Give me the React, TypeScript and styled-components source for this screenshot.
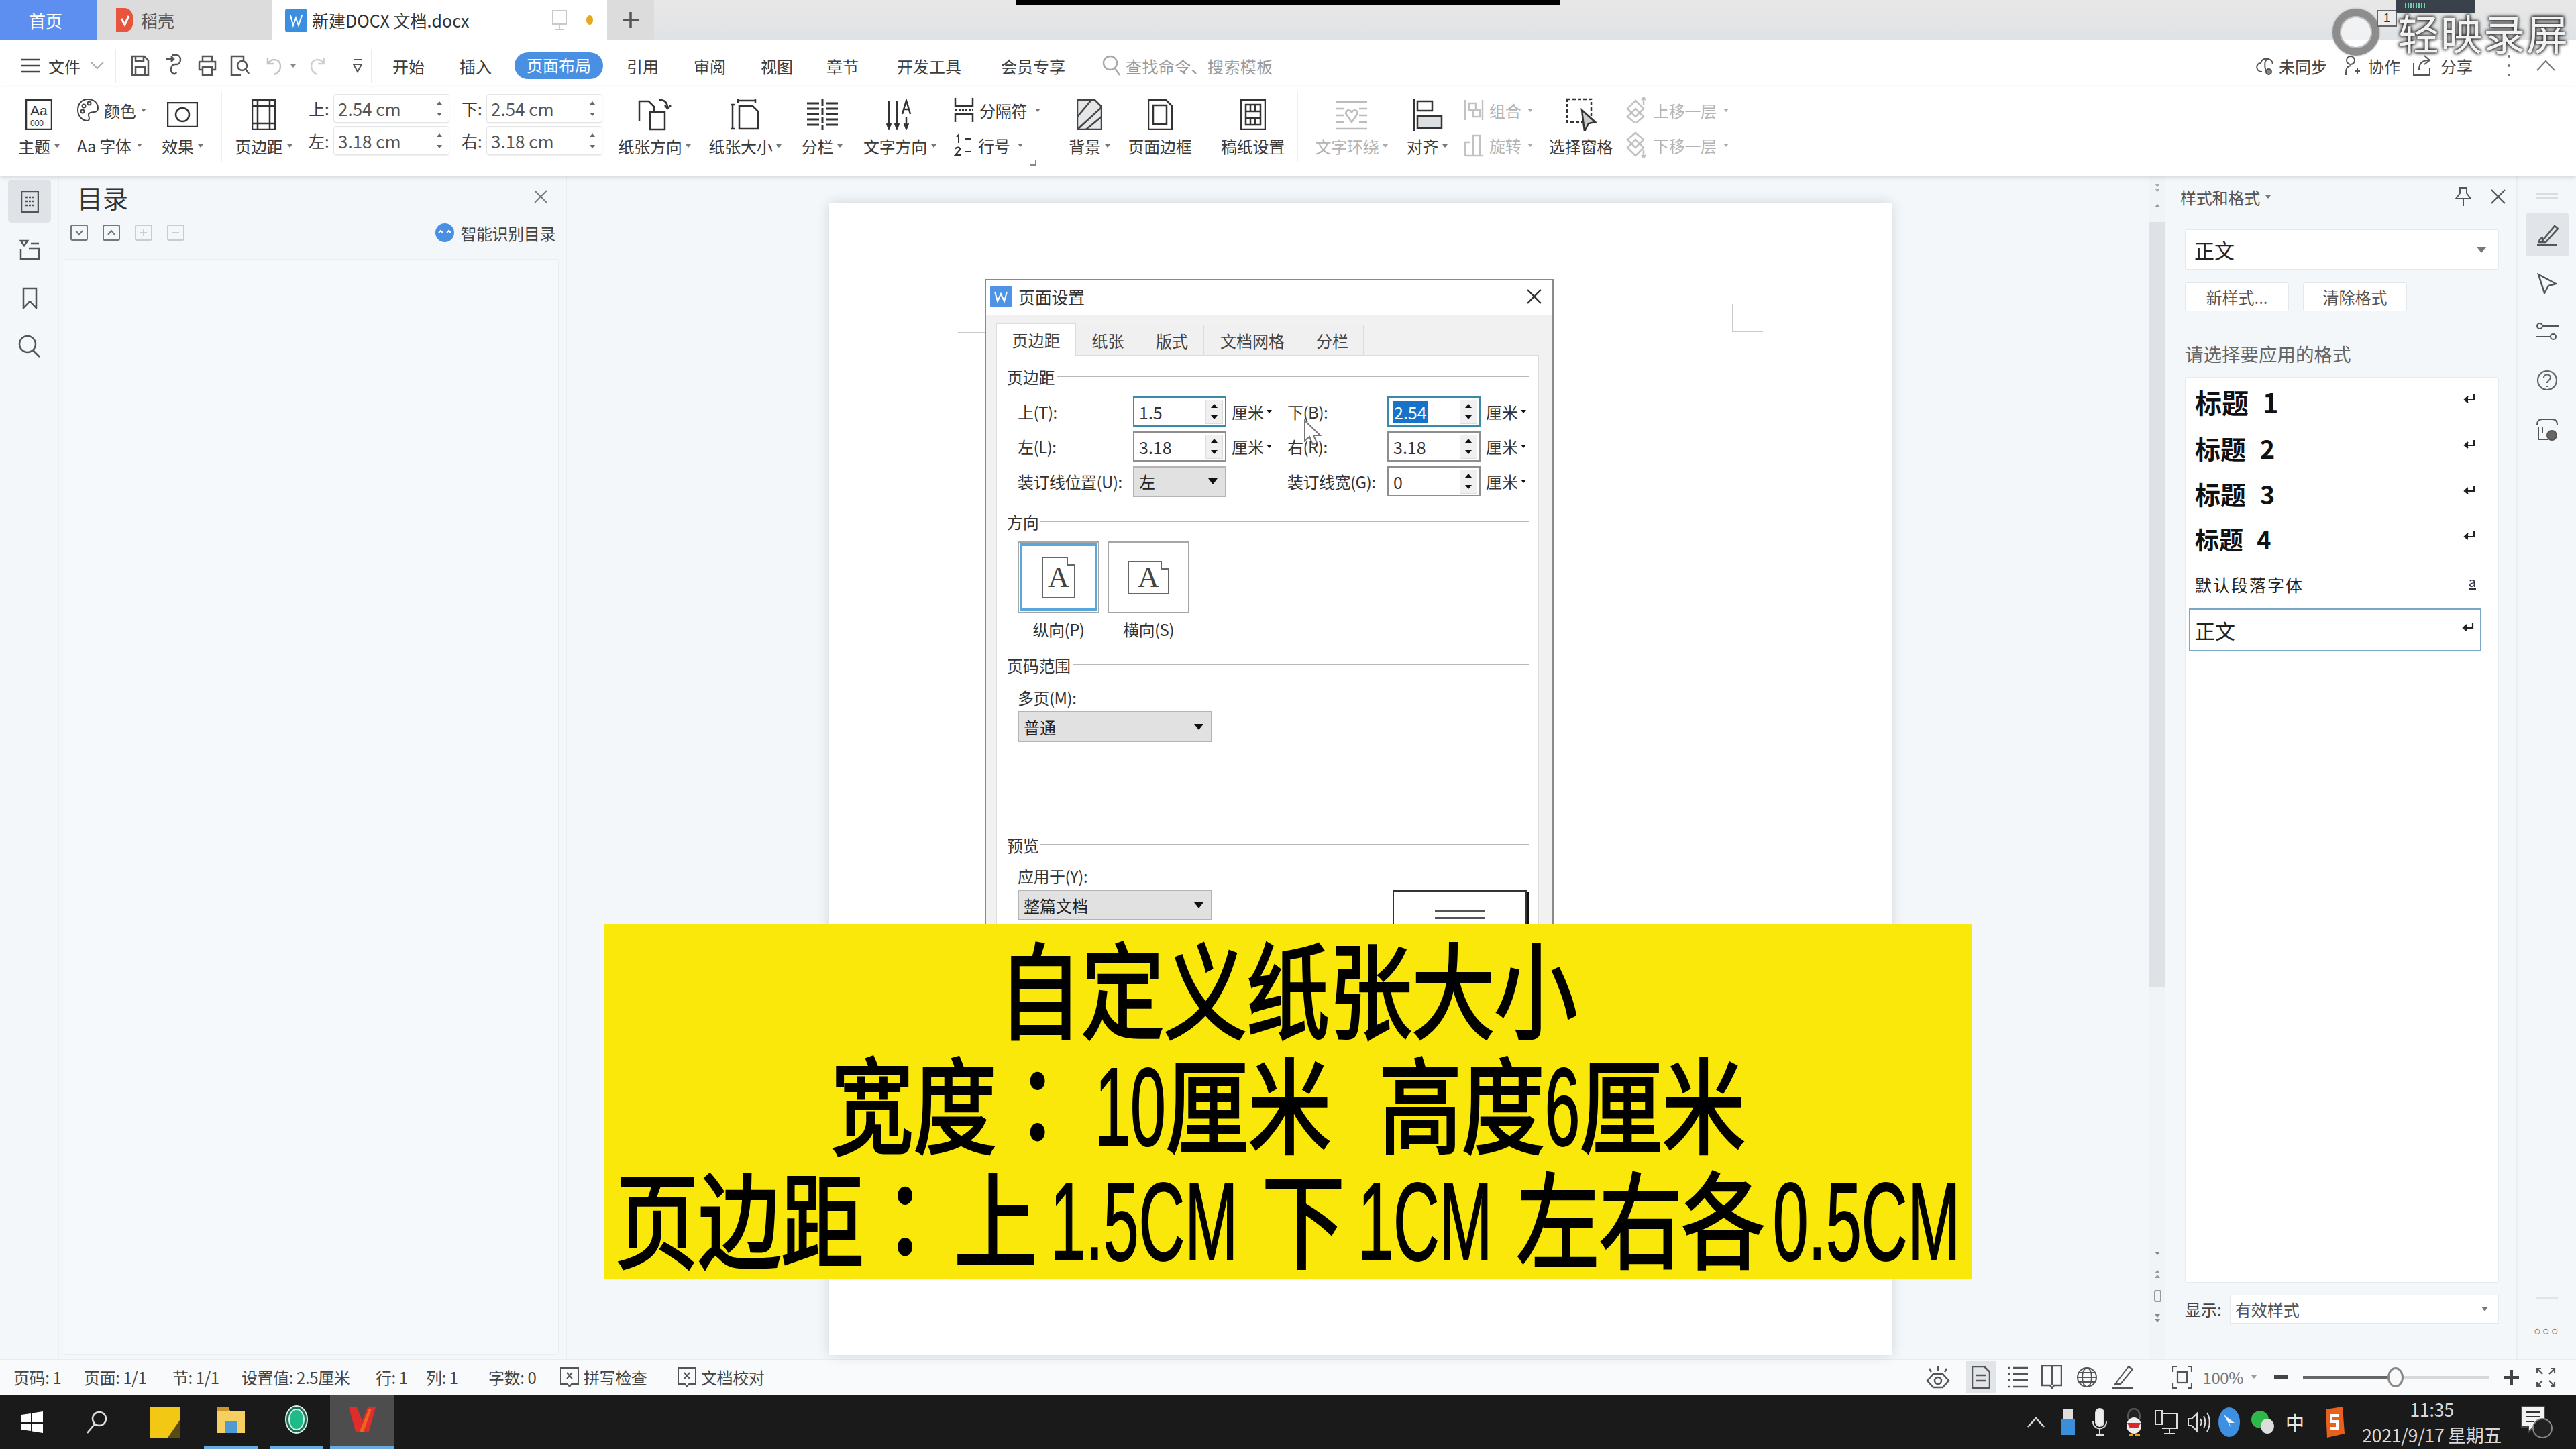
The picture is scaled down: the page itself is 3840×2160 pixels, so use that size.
import React from 'react';
import styled, { createGlobalStyle } from 'styled-components';

const Global = createGlobalStyle`
  html, body { margin: 0; padding: 0; background: #fff; }
  * { box-sizing: border-box; }
`;
const CJK = `"Noto Sans CJK SC", "Noto Sans", sans-serif`;

const Screen = styled.div`
  position: relative; width: 3840px; height: 2160px; overflow: hidden;
  display: flex; flex-direction: column; font-family: ${CJK}; font-size: 24px; color: #3c3c3c; background: #f3f6f8;
`;
const Svg = styled.svg<{ $c?: string; $sw?: number; $fill?: string }>`
  display: block; flex: none; fill: ${p => p.$fill || 'none'}; stroke: ${p => p.$c || '#4a4a4a'}; stroke-width: ${p => p.$sw ?? 2.5};
`;
const Ic: React.FC<{ w: number; h: number; c?: string; sw?: number; fill?: string; children?: React.ReactNode }> = ({ w, h, c, sw, fill, children }) => (
  <Svg width={w} height={h} viewBox={`0 0 ${w} ${h}`} $c={c} $sw={sw} $fill={fill}>{children}</Svg>
);
const Caret = styled.i<{ $c?: string; $s?: number; $ml?: number }>`
  display: inline-block; flex: none; width: 0; height: 0; margin-left: ${p => p.$ml ?? 6}px; vertical-align: middle;
  border-left: ${p => p.$s ?? 4}px solid transparent; border-right: ${p => p.$s ?? 4}px solid transparent;
  border-top: ${p => (p.$s ?? 4) * 1.4}px solid ${p => p.$c || '#777'};
`;

/* title bar */
const TabBar = styled.div`
  height: 60px; flex: none; display: flex; background: linear-gradient(#e9e7e6, #dfe3e6);
`;
const HomeTab = styled.div`
  width: 144px; background: #5c8ff0; color: #fff; display: flex; align-items: center; justify-content: center; font-size: 25px; padding-right: 8px;
`;
const GrayTab = styled.div`
  width: 261px; background: #dcdcdc; display: flex; align-items: center; gap: 10px; padding-left: 28px; font-size: 25px; color: #555;
`;
const DocTab = styled.div`
  width: 500px; background: #fff; display: flex; align-items: center; padding-left: 20px; font-size: 25px; color: #333;
`;
const DocName = styled.span` margin-left: 7px; width: 357px; `;
const OrangeDot = styled.span` width: 10px; height: 14px; border-radius: 50%; background: #e8a81e; margin-left: 28px; `;
const PlusTab = styled.div`
  width: 70px; background: #dcdcdc; display: flex; align-items: center; justify-content: center;
`;

/* menu row */
const MenuRow = styled.div`
  height: 70px; flex: none; background: #fff; display: flex; align-items: center; padding: 6px 30px 0 32px; position: relative; z-index: 2;
`;
const MenuTab = styled.span<{ $ml: number; $on?: boolean }>`
  margin-left: ${p => p.$ml}px; font-size: 24px; white-space: nowrap; color: ${p => (p.$on ? '#fff' : '#3c3c3c')};
  ${p => p.$on && `background:#4a90e2;border-radius:20px;height:40px;line-height:38px;padding:0 18px;`}
`;
const Gap = styled.span<{ $w: number }>` flex: none; width: ${p => p.$w}px; `;
const VLine = styled.span<{ $ml: number; $h?: number }>`
  flex: none; width: 1px; height: ${p => p.$h ?? 50}px; background: #ececec; margin-left: ${p => p.$ml}px;
`;
const SearchText = styled.span` margin-left: 8px; color: #9a9a9a; font-size: 24px; letter-spacing: 0.4px; `;
const MenuRight = styled.div` margin-left: auto; display: flex; align-items: center; font-size: 24px; color: #444; `;

/* ribbon */
const Ribbon = styled.div`
  height: 133px; flex: none; background: #fff; display: flex; align-items: flex-start; padding: 16px 0 0 20px; position: relative; z-index: 2;
  box-shadow: 0 2px 6px rgba(0, 0, 0, 0.13);
`;
const Big = styled.div<{ $w: number; $ml?: number; $dim?: boolean }>`
  flex: none; width: ${p => p.$w}px; margin-left: ${p => p.$ml ?? 0}px; display: flex; flex-direction: column; align-items: center;
  color: ${p => (p.$dim ? '#b4b4b4' : '#3a3a3a')};
`;
const BigIcon = styled.div` height: 49px; display: flex; align-items: center; justify-content: center; `;
const BigLabel = styled.div` height: 44px; display: flex; align-items: center; white-space: nowrap; font-size: 24px; letter-spacing: -0.3px; `;
const Stack = styled.div<{ $w: number; $ml?: number }>`
  flex: none; width: ${p => p.$w}px; margin-left: ${p => p.$ml ?? 0}px; display: flex; flex-direction: column; gap: 16px;
`;
const StackRow = styled.div<{ $dim?: boolean }>`
  height: 36px; display: flex; align-items: center; gap: 8px; white-space: nowrap; font-size: 24px; letter-spacing: -0.3px;
  color: ${p => (p.$dim ? '#b4b4b4' : '#3a3a3a')};
`;
const RibbonSep = styled.span<{ $ml: number }>`
  flex: none; width: 1px; height: 105px; margin-top: -10px; background: #f0f0f0; margin-left: ${p => p.$ml}px;
`;
const Fields = styled.div<{ $ml: number }>`
  flex: none; margin-left: ${p => p.$ml}px; margin-top: -6px; display: grid; grid-template-columns: 37px 173px 18px 37px 173px; row-gap: 5px; width: 438px; align-items: center;
`;
const FieldLabel = styled.span` font-size: 24px; white-space: nowrap; `;
const Field = styled.div`
  height: 43px; border: 1px solid #e4e4e4; border-radius: 4px; box-shadow: 0 1px 2px rgba(0,0,0,.08); display: flex; align-items: center; justify-content: space-between;
  padding: 0 10px 0 6px; font-size: 26px; color: #555;
`;
const MiniSpin = styled.div` display: flex; flex-direction: column; gap: 12px; `;
const Up = styled.i<{ $c?: string; $s?: number }>`
  display: block; width: 0; height: 0; border-left: ${p => p.$s ?? 4}px solid transparent; border-right: ${p => p.$s ?? 4}px solid transparent;
  border-bottom: ${p => (p.$s ?? 4) * 1.3}px solid ${p => p.$c || '#666'};
`;
const Down = styled(Up)`
  border-bottom: 0; border-top: ${p => (p.$s ?? 4) * 1.3}px solid ${p => p.$c || '#666'};
`;
const Expander = styled.span`
  flex: none; align-self: flex-start; margin: 92px 0 0 -18px; width: 9px; height: 9px; border-right: 2px solid #888; border-bottom: 2px solid #888;
`;

/* main */
const Main = styled.div` flex: 1; min-height: 0; display: flex; background: #f3f7f9; `;
const LeftRail = styled.div`
  width: 88px; flex: none; padding: 5px 0 0 12px; display: flex; flex-direction: column; gap: 8px; border-right: 2px solid #eceff1;
`;
const RailBtn = styled.div<{ $on?: boolean }>`
  width: 64px; height: 64px; border-radius: 5px; display: flex; align-items: center; justify-content: center; background: ${p => (p.$on ? '#dfe3e7' : 'transparent')};
`;
const NavPanel = styled.div`
  width: 757px; flex: none; padding: 8px 10px 6px 7px; display: flex; flex-direction: column; border-right: 2px solid #eceff1;
`;
const NavHead = styled.div` height: 44px; display: flex; align-items: center; justify-content: space-between; padding: 0 17px 0 20px; `;
const NavTitle = styled.span` font-size: 38px; color: #333; `;
const NavTools = styled.div` height: 24px; margin-top: 20px; display: flex; align-items: center; padding: 0 5px 0 10px; gap: 22px; `;
const Smart = styled.div` margin-left: auto; display: flex; align-items: center; gap: 8px; font-size: 24px; color: #444; letter-spacing: -0.4px; `;
const NavBox = styled.div` flex: 1; margin-top: 27px; border: 1px solid #e9edf0; border-radius: 4px; background: #f5f9fb; `;
const DocArea = styled.div` flex: 1; min-width: 0; padding: 39px 0 6px 391px; display: flex; `;
const Page = styled.div`
  position: relative; flex: none; width: 1584px; background: #fff; box-shadow: 0 0 18px rgba(0, 0, 0, 0.14);
`;
const CropMark = styled.span`
  position: absolute; left: 1346px; top: 151px; width: 46px; height: 42px; border-left: 2px solid #c9c9c9; border-bottom: 2px solid #c9c9c9;
`;
const CropLeft = styled.span` position: absolute; left: 192px; top: 193px; width: 42px; height: 2px; background: #c9c9c9; `;

/* scroll */
const Scroll = styled.div`
  width: 24px; flex: none; display: flex; flex-direction: column; align-items: center; background: #f1f4f6; padding-top: 11px;
`;
const Thumb = styled.div` width: 24px; height: 1140px; flex: none; margin-top: 22px; background: #dee1e5; `;
const ScrollGlyph = styled.div<{ $mt: number }>` margin-top: ${p => p.$mt}px; display: flex; flex-direction: column; gap: 2px; align-items: center; `;
const ScrollDot = styled.span<{ $mt: number }>` margin-top: ${p => p.$mt}px; width: 11px; height: 18px; border: 2px solid #999; border-radius: 3px; `;

/* styles panel */
const StylePanel = styled.div`
  width: 525px; flex: none; padding: 15px 26px 53px 29px; display: flex; flex-direction: column; border-right: 2px solid #eceff1;
`;
const StyleHead = styled.div` height: 30px; margin: 0 -10px 0 -7px; flex: none; display: flex; align-items: center; color: #555; font-size: 24px; letter-spacing: -0.2px; `;
const HeadTools = styled.div` margin-left: auto; display: flex; align-items: center; gap: 28px; `;
const Combo = styled.div`
  height: 60px; margin-top: 34px; flex: none; background: #fff; border: 1px solid #e6e9ec; border-radius: 3px; display: flex; align-items: center; justify-content: space-between;
  padding: 0 18px 0 13px; font-size: 30px; color: #222;
`;
const BtnRow = styled.div` display: flex; gap: 21px; margin-top: 19px; flex: none; `;
const PanelBtn = styled.div`
  width: 155px; height: 43px; background: #fff; border: 1px solid #e4e7ea; border-radius: 3px; display: flex; align-items: center; justify-content: center; font-size: 24px; color: #555;
`;
const HintLabel = styled.div` margin-top: 47px; height: 32px; flex: none; line-height: 32px; font-size: 27.5px; color: #666; `;
const StyleList = styled.div`
  flex: 1; min-height: 0; margin-top: 19px; background: #fff; border: 1px solid #e8ebee; border-radius: 3px; padding: 7px 25px 0 5px; display: flex; flex-direction: column;
`;
const StyleItem = styled.div<{ $sel?: boolean }>`
  height: ${p => (p.$sel ? 64 : 68)}px; flex: none; display: flex; align-items: center; justify-content: space-between; padding: 0 8px 10px 9px;
  ${p => p.$sel && `border:2px solid #7aa6c8;padding:0 8px 0 7px;margin-top:-3px;`}
`;
const HeadingText = styled.span<{ $fs: number; $gap: number }>`
  font-size: ${p => p.$fs}px; font-weight: 700; color: #111; white-space: pre; word-spacing: ${p => p.$gap}px;
`;
const DefaultText = styled.span` font-size: 25px; letter-spacing: 2px; color: #222; `;
const BodyText = styled.span` font-size: 30px; color: #222; `;
const Under = styled.span` font-size: 20px; line-height: 20px; color: #333; border-bottom: 2px solid #333; margin-bottom: 6px; `;
const EnterWrap = styled.span` margin-bottom: 8px; `;
const ShowRow = styled.div` margin-top: 18px; height: 43px; flex: none; display: flex; align-items: center; gap: 12px; font-size: 24px; color: #444; `;
const ShowSelect = styled.div`
  flex: 1; height: 43px; background: #fff; border: 1px solid #e6e9ec; display: flex; align-items: center; justify-content: space-between; padding: 0 15px 0 7px; color: #555;
`;
const RightRail = styled.div` width: 87px; flex: none; display: flex; flex-direction: column; align-items: center; padding-top: 25px; `;
const Handle = styled.span` width: 32px; height: 8px; flex: none; border-top: 2px solid #dcdcdc; border-bottom: 2px solid #dcdcdc; `;
const RightBtn = styled.div<{ $on?: boolean; $mt?: number }>`
  width: 64px; height: 64px; flex: none; margin-top: ${p => p.$mt ?? 9}px; border-radius: 3px; display: flex; align-items: center; justify-content: center; background: ${p => (p.$on ? '#e1e5e9' : 'transparent')};
`;
const RailFoot = styled.div` margin-top: auto; padding-bottom: 36px; display: flex; flex-direction: column; align-items: center; gap: 42px; `;
const FootLine = styled.span` width: 32px; height: 2px; background: #e3e3e3; `;
const Dots = styled.span` font-size: 18px; letter-spacing: 2px; color: #666; line-height: 12px; font-family: "Liberation Sans", sans-serif; `;

/* status */
const StatusBar = styled.div`
  height: 54px; flex: none; background: #f8fafb; display: flex; align-items: center; padding: 0 30px 2px 20px; font-size: 24px; color: #444; border-top: 1px solid #e9ecee; letter-spacing: -0.4px;
`;
const StatusItem = styled.div<{ $w: number }>` width: ${p => p.$w}px; flex: none; display: flex; align-items: center; gap: 7px; white-space: nowrap; `;
const StatusRight = styled.div` margin-left: auto; display: flex; align-items: center; height: 100%; `;
const ViewActive = styled.div` width: 46px; height: 48px; background: #e2e5e8; display: flex; align-items: center; justify-content: center; margin-left: 22px; `;
const Slider = styled.div`
  position: relative; width: 277px; height: 4px; margin-left: 23px; background: linear-gradient(to right, #666 50%, #d8d8d8 50%);
`;
const Knob = styled.span`
  position: absolute; left: 126px; top: -13px; width: 24px; height: 30px; border-radius: 50%; background: #f8f8f8; border: 3px solid #888;
`;
const Percent = styled.span` margin-left: 16px; color: #777; `;

/* taskbar */
const Taskbar = styled.div` height: 80px; flex: none; background: #1a1a1a; display: flex; align-items: stretch; `;
const Slot = styled.div<{ $w: number; $ml?: number; $run?: boolean; $act?: boolean }>`
  width: ${p => p.$w}px; margin-left: ${p => p.$ml ?? 0}px; flex: none; display: flex; align-items: center; justify-content: center; padding-bottom: ${p => (p.$run ? 4 : 0)}px;
  border-bottom: ${p => (p.$run ? '4px solid #6aa9dd' : '0')}; background: ${p => (p.$act ? '#4d4d4d' : 'transparent')};
`;
const Tray = styled.div` margin-left: auto; display: flex; align-items: center; `;
const TrayItem = styled.div<{ $ml: number }>` margin-left: ${p => p.$ml}px; flex: none; display: flex; align-items: center; color: #e6e6e6; font-size: 28px; `;
const Clock = styled.div`
  width: 210px; margin-left: 25px; text-align: center; color: #d8d8d8; font-size: 27px; line-height: 38px; letter-spacing: -0.4px; white-space: nowrap;
`;

/* dialog */
const Dialog = styled.div`
  position: absolute; left: 1468px; top: 416px; width: 848px; height: 1100px; background: #f1f1f1; border: 2px solid #8a8a8a; z-index: 3; display: flex; flex-direction: column; font-size: 24px; color: #333;
`;
const DlgTitle = styled.div` height: 52px; flex: none; background: #fff; display: flex; align-items: center; padding: 0 16px 4px 6px; font-size: 25px; letter-spacing: -0.3px; `;
const DlgTitleText = styled.span` margin-left: 10px; `;
const DlgClose = styled.div` margin-left: auto; `;
const DlgTabs = styled.div` flex: none; display: flex; padding: 12px 0 0 15px; height: 60px; margin-bottom: -1px; `;
const DlgTab = styled.div<{ $w: number; $on?: boolean }>`
  width: ${p => p.$w}px; display: flex; align-items: center; justify-content: center; position: relative; z-index: 1; color: #444;
  background: ${p => (p.$on ? '#fff' : '#f0f0f0')}; border: 1px solid #dcdcdc; border-left: ${p => (p.$on ? '1px solid #dcdcdc' : '0')};
  border-bottom: ${p => (p.$on ? '0' : '1px solid #dcdcdc')};
  ${p => !p.$on && `margin-top:2px;`}
`;
const Pane = styled.div`
  flex: 1; margin: 0 20px 0 15px; background: #fff; border: 1px solid #dcdcdc; padding: 16px 14px 0 15px;
`;
const Section = styled.div<{ $mt?: number }>`
  height: 30px; margin-top: ${p => p.$mt ?? 0}px; display: flex; align-items: center; gap: 3px; font-size: 24px; letter-spacing: -0.3px; color: #333;
  &::after { content: ''; flex: 1; height: 2px; background: #b8b8b8; }
`;
const Form = styled.div`
  margin: 15px 0 0 16px; display: grid; grid-template-columns: 172px 139px 91px 149px 139px 1fr; grid-auto-rows: 45px; row-gap: 7px; align-items: center;
`;
const Lb = styled.span` white-space: nowrap; letter-spacing: -0.5px; `;
const Spin = styled.div<{ $active?: boolean }>`
  height: 45px; border: 2px solid ${p => (p.$active ? '#3a8aa8' : '#8e8e8e')}; background: #fff; display: flex; align-items: center; padding: 0 3px 0 7px; justify-content: space-between; font-size: 25px;
`;
const SpinBtns = styled.div` width: 26px; height: 36px; background: #f0f0f0; border: 1px solid #dedede; display: flex; flex-direction: column; justify-content: space-around; align-items: center; `;
const Sel = styled.span` background: #1573c9; color: #fff; padding: 0 1px; line-height: 32px; `;
const Unit = styled.span` padding-left: 8px; display: flex; align-items: center; white-space: nowrap; `;
const Combo2 = styled.div<{ $w?: number }>`
  width: ${p => (p.$w ? `${p.$w}px` : 'auto')}; height: 46px; background: #e1e1e1; border: 2px solid #b4b4b4; display: flex; align-items: center; justify-content: space-between; padding: 0 11px 0 7px; color: #222;
`;
const Orients = styled.div` margin: 15px 0 0 16px; display: flex; gap: 12px; `;
const OrientCol = styled.div` width: 122px; display: flex; flex-direction: column; align-items: center; `;
const Orient = styled.div<{ $on?: boolean }>`
  width: 122px; height: 107px; background: #fff; border: 2px solid #a6a6a6; display: flex; align-items: center; justify-content: center;
  ${p => p.$on && `outline: 4px solid #58a6dc; outline-offset: -7px;`}
`;
const OrientLabel = styled.span` margin-top: 9px; height: 30px; line-height: 30px; letter-spacing: -0.5px; white-space: nowrap; `;
const PageGlyph = styled.div<{ $land?: boolean }>`
  position: relative; width: ${p => (p.$land ? 62 : 50)}px; height: ${p => (p.$land ? 50 : 62)}px; border: 2px solid #666; display: flex; align-items: center; justify-content: center;
  font-family: "Liberation Serif", serif; font-size: 44px; line-height: 1; color: #444;
  &::after { content: ''; position: absolute; right: -2px; top: -2px; width: 11px; height: 11px; background: #fff; border-left: 2px solid #666; border-bottom: 2px solid #666; }
`;
const Indented = styled.div<{ $mt: number }>` margin: ${p => p.$mt}px 0 0 16px; height: 30px; line-height: 30px; letter-spacing: -0.5px; `;
const SelectWrap = styled.div` margin: 5px 0 0 16px; `;
const ApplyRow = styled.div` display: flex; align-items: flex-start; `;
const Preview = styled.div`
  width: 200px; height: 170px; margin: 53px 0 0 269px; background: #fff; border: 2px solid #333; box-shadow: 3px 3px 0 #111; padding-top: 28px; display: flex; flex-direction: column; align-items: center; gap: 7px;
`;
const PrevLine = styled.span` width: 74px; height: 3px; background: #555; `;
const Cursor = styled.div` position: absolute; left: 473px; top: 207px; z-index: 5; `;

/* overlays */
const Banner = styled.div`
  position: absolute; left: 900px; top: 1378px; width: 2040px; height: 528px; background: #f9e80a; z-index: 4; overflow: hidden; padding-top: 5px; color: #000;
`;
const BannerLine = styled.div`
  width: 2800px; margin-left: -380px; height: 171px; line-height: 171px; text-align: center; white-space: nowrap; font-size: 155px; font-weight: 400; transform: scaleX(0.795);
  -webkit-text-stroke: 4px #000;
`;
const Latin = styled.span<{ $em: number }>`
  display: inline-block; width: ${p => p.$em * 0.72 * 166}px; text-align: left; font-family: "Liberation Sans", sans-serif; font-size: 166px;
  transform: scaleX(0.72); transform-origin: 0 50%; line-height: 150px; -webkit-text-stroke: 2px #000;
`;
const Colon = styled.span` font-family: "Noto Sans CJK TC", sans-serif; `;
const Sp = styled.span<{ $w: number }>` display: inline-block; width: ${p => p.$w}px; `;
const TopBlack = styled.div` position: absolute; left: 1514px; top: 0; width: 812px; height: 8px; background: #000; z-index: 6; `;
const Mark = styled.div` position: absolute; left: 3477px; top: 0; width: 363px; height: 90px; z-index: 6; `;
const MarkText = styled.span`
  position: absolute; left: 97px; top: 12px; font-size: 62px; line-height: 72px; letter-spacing: 2px; white-space: nowrap; color: #f2f2f2; text-shadow: 0 0 4px #333, 0 0 4px #333, 0 0 6px #444;
`;
const MarkRing = styled.span`
  position: absolute; left: 0; top: 13px; width: 70px; height: 70px; border-radius: 50%; border: 11px solid #8d8d8d; box-shadow: 0 0 3px #999, inset 0 0 0 2px #bbb; background: rgba(255,255,255,.5);
`;
const MarkBadge = styled.span`
  position: absolute; left: 66px; top: 15px; width: 30px; height: 25px; border: 2px solid #666; background: #eee; font-size: 18px; line-height: 21px; text-align: center; color: #333; font-family: "Liberation Sans", sans-serif;
`;
const Meter = styled.div`
  position: absolute; left: 95px; top: 0; width: 118px; height: 20px; background: #39424a; border-radius: 0 0 4px 4px; padding: 5px 0 0 13px;
`;
const MeterBar = styled.span` display: block; width: 32px; height: 7px; background: repeating-linear-gradient(90deg, #6fd1b0 0 2px, #39424a 2px 4px); `;
const IconText = styled.text`
  font-family: "Liberation Sans", sans-serif; stroke: none; fill: #333;
`;

const Enter = () => (
  <EnterWrap>
    <Ic w={20} h={18} c="#222" sw={2.2}><path d="M17 2v8H4" /><path d="M8 5l-5 5 5 4" fill="#222" /></Ic>
  </EnterWrap>
);
const SpinUD = () => (
  <SpinBtns><Up $c="#111" $s={5} /><Down $c="#111" $s={5} /></SpinBtns>
);
const DocUnit = () => <Unit>厘米<Caret $c="#111" $s={4} $ml={4} /></Unit>;

const App: React.FC = () => (
  <Screen>
    <Global />
    <TabBar>
      <HomeTab>首页</HomeTab>
      <GrayTab>
        <Ic w={28} h={40} c="none" fill="#e8553f"><path d="M1 2h12c9 0 14 8 14 18s-5 18-14 18H1z" /><path d="M9 18l5 9 6-13" stroke="#fff" strokeWidth="3" fill="none" /></Ic>
        稻壳
      </GrayTab>
      <DocTab>
        <Ic w={33} h={33} c="none" fill="#3a8fe0"><rect width="33" height="33" rx="2" /><path d="M8 9l4 15 4-11 4 11 5-15" stroke="#fff" strokeWidth="2" fill="none" /></Ic>
        <DocName>新建DOCX 文档.docx</DocName>
        <Ic w={24} h={38} c="#c9c9c9" sw={2}><rect x="2" y="5" width="20" height="20" /><path d="M12 25v7M6 33h12" /></Ic>
        <OrangeDot />
      </DocTab>
      <PlusTab><Ic w={26} h={26} c="#555" sw={3.5}><path d="M13 1v24M1 13h24" /></Ic></PlusTab>
    </TabBar>

    <MenuRow>
      <Ic w={28} h={24} c="#444" sw={2.5}><path d="M0 3h28M0 12h28M0 21h28" /></Ic>
      <MenuTab $ml={12}>文件</MenuTab>
      <Gap $w={15} />
      <Ic w={20} h={12} c="#aaa" sw={2}><path d="M1 1l9 9 9-9" /></Ic>
      <VLine $ml={17} />
      <Gap $w={22} />
      <Ic w={28} h={32} c="#555"><path d="M2 2h18l6 6v22H2z" /><path d="M7 30V18h14v12M7 2v7h12V2" /></Ic>
      <Gap $w={22} />
      <Ic w={28} h={36} c="#555"><path d="M12 2h6c8 0 8 14 0 14h-2c-4 0-6 4-6 8 0 6 6 8 8 4M2 8h12M10 4l4 4-4 4" /></Ic>
      <Gap $w={22} />
      <Ic w={28} h={32} c="#555"><path d="M7 10V2h14v8M2 10h24v12h-5M7 22H2V10M7 18h14v12H7z" /></Ic>
      <Gap $w={20} />
      <Ic w={30} h={32} c="#555"><path d="M16 30H2V2h18v6" /><circle cx="18" cy="16" r="7" /><path d="M23 21l5 7" /></Ic>
      <Gap $w={22} />
      <Ic w={26} h={32} c="#c4c4c4"><path d="M4 4v9h9M5 12c6-8 18-6 18 5 0 6-4 10-9 12" /></Ic>
      <Caret $c="#888" $ml={12} />
      <Gap $w={20} />
      <Ic w={26} h={32} c="#d0d0d0"><path d="M22 4v9h-9M21 12C15 4 3 6 3 17c0 6 4 10 9 12" /></Ic>
      <Gap $w={38} />
      <Ic w={16} h={22} c="#555" sw={2}><path d="M2 2h12M8 20L2 9h12z" /></Ic>
      <VLine $ml={12} />
      <MenuTab $ml={31}>开始</MenuTab>
      <MenuTab $ml={52}>插入</MenuTab>
      <MenuTab $ml={34} $on>页面布局</MenuTab>
      <MenuTab $ml={35}>引用</MenuTab>
      <MenuTab $ml={52}>审阅</MenuTab>
      <MenuTab $ml={52}>视图</MenuTab>
      <MenuTab $ml={50}>章节</MenuTab>
      <MenuTab $ml={57}>开发工具</MenuTab>
      <MenuTab $ml={59}>会员专享</MenuTab>
      <Gap $w={55} />
      <Ic w={27} h={32} c="#aaa"><circle cx="12" cy="12" r="10" /><path d="M19 20l7 10" /></Ic>
      <SearchText>查找命令、搜索模板</SearchText>
      <MenuRight>
        <Ic w={30} h={36} c="#555" sw={2}><path d="M10 27C0 27 0 14 8 14c2-10 18-8 18 2M20 8c-8 0-6 14-4 18" /><circle cx="20" cy="27" r="4" fill="#888" /></Ic>
        <Gap $w={5} />未同步
        <Gap $w={25} />
        <Ic w={24} h={36} c="#555" sw={2}><circle cx="10" cy="10" r="6" /><path d="M3 32c0-8 0-12 7-14M16 26h8M20 22v8" /></Ic>
        <Gap $w={12} />协作
        <Gap $w={18} />
        <Ic w={30} h={36} c="#555" sw={2}><path d="M2 14v18h24V22M10 24c0-10 6-14 14-14M18 3l8 7-8 6" /></Ic>
        <Gap $w={12} />分享
        <Gap $w={52} />
        <Ic w={4} h={36} c="none" fill="#777"><circle cx="2" cy="4" r="2" /><circle cx="2" cy="18" r="2" /><circle cx="2" cy="32" r="2" /></Ic>
        <Gap $w={38} />
        <Ic w={30} h={18} c="#777" sw={2}><path d="M2 16L15 2l13 14" /></Ic>
      </MenuRight>
    </MenuRow>

    <Ribbon>
      <Big $w={76}>
        <BigIcon><Ic w={40} h={46} c="#333"><rect x="1" y="1" width="38" height="44" /><IconText x="7" y="24" fontSize="21">Aa</IconText><IconText x="7" y="40" fontSize="12">000</IconText></Ic></BigIcon>
        <BigLabel>主题<Caret /></BigLabel>
      </Big>
      <Stack $w={117} $ml={19}>
        <StackRow>
          <Ic w={32} h={36} c="#444" sw={2}><path d="M16 2C6 2 1 10 1 18s6 16 14 16c4 0 3-5 2-8s3-5 8-5 6-3 6-6C31 7 24 2 16 2z" /><circle cx="10" cy="12" r="2.5" /><circle cx="18" cy="8" r="2.5" /><circle cx="8" cy="20" r="2.5" /></Ic>
          颜色<Caret $ml={0} />
        </StackRow>
        <StackRow>Aa 字体<Caret $ml={0} /></StackRow>
      </Stack>
      <Big $w={80}>
        <BigIcon><Ic w={46} h={38} c="#333"><rect x="1" y="1" width="44" height="36" /><circle cx="23" cy="19" r="10" /></Ic></BigIcon>
        <BigLabel>效果<Caret /></BigLabel>
      </Big>
      <RibbonSep $ml={18} />
      <Big $w={90} $ml={17}>
        <BigIcon><Ic w={36} h={46} c="#333"><rect x="1" y="1" width="34" height="44" /><path d="M9 1v44M27 1v44M1 10h34M1 36h34" /></Ic></BigIcon>
        <BigLabel>页边距<Caret /></BigLabel>
      </Big>
      <Fields $ml={22}>
        <FieldLabel>上:</FieldLabel>
        <Field>2.54 cm<MiniSpin><Up /><Down /></MiniSpin></Field>
        <span />
        <FieldLabel>下:</FieldLabel>
        <Field>2.54 cm<MiniSpin><Up /><Down /></MiniSpin></Field>
        <FieldLabel>左:</FieldLabel>
        <Field>3.18 cm<MiniSpin><Up /><Down /></MiniSpin></Field>
        <span />
        <FieldLabel>右:</FieldLabel>
        <Field>3.18 cm<MiniSpin><Up /><Down /></MiniSpin></Field>
      </Fields>
      <Big $w={120} $ml={18}>
        <BigIcon><Ic w={50} h={48} c="#333"><path d="M2 34V4h14l8 8v8M18 20h22v26H18z" /><path d="M32 2c8 0 12 4 12 12M40 10l4 5 5-5" /></Ic></BigIcon>
        <BigLabel>纸张方向<Caret /></BigLabel>
      </Big>
      <Big $w={114} $ml={18}>
        <BigIcon><Ic w={42} h={46} c="#333"><path d="M2 8v36M0 8h5M0 44h5M10 2h26M10 0v5M36 0v5" /><path d="M12 44V10h20l8 8v26z" /></Ic></BigIcon>
        <BigLabel>纸张大小<Caret /></BigLabel>
      </Big>
      <Big $w={65} $ml={25}>
        <BigIcon><Ic w={46} h={46} c="#333" sw={3}><path d="M23 0v46" strokeDasharray="10 3" /><path d="M0 6h18M0 14h18M0 22h18M0 30h18M0 38h18M28 6h18M28 14h18M28 22h18M28 30h18M28 38h18" /></Ic></BigIcon>
        <BigLabel>分栏<Caret /></BigLabel>
      </Big>
      <Big $w={111} $ml={28}>
        <BigIcon><Ic w={42} h={46} c="#333"><path d="M4 2v38M1 36l3 8 3-8M16 2v38M13 36l3 8 3-8M30 26v14M27 36l3 8 3-8M24 22l6-20 6 20M26 15h8" /></Ic></BigIcon>
        <BigLabel>文字方向<Caret /></BigLabel>
      </Big>
      <Stack $w={132} $ml={25}>
        <StackRow>
          <Ic w={30} h={36} c="#333"><path d="M2 0v12h26V0M2 36V24h26v12" /><path d="M2 18h26" strokeDasharray="3 2" /></Ic>
          分隔符<Caret $ml={4} />
        </StackRow>
        <StackRow>
          <Ic w={28} h={36} c="#333" sw={2}><path d="M4 6l3-3v12M2 24c2-4 8-3 7 1l-7 8h8M16 9h10M16 28h10" /></Ic>
          行号<Caret $ml={4} />
        </StackRow>
      </Stack>
      <Expander />
      <RibbonSep $ml={24} />
      <Big $w={66} $ml={21}>
        <BigIcon><Ic w={38} h={46} c="#444" fill="#e4e6e8"><path d="M1 1h26l10 10v34H1z" /><path d="M1 26L22 1M1 45L37 12M14 45L37 26" fill="none" /></Ic></BigIcon>
        <BigLabel>背景<Caret /></BigLabel>
      </Big>
      <Big $w={96} $ml={24}>
        <BigIcon><Ic w={37} h={46} c="#333"><path d="M1 1h26l9 9v35H1z" /><rect x="8" y="9" width="20" height="28" /></Ic></BigIcon>
        <BigLabel>页面边框</BigLabel>
      </Big>
      <RibbonSep $ml={22} />
      <Big $w={97} $ml={19}>
        <BigIcon><Ic w={38} h={46} c="#333"><rect x="1" y="1" width="36" height="44" /><path d="M8 8h22v30H8zM8 18h22M8 28h22M15 8v10M22 8v10M15 28v10M22 28v10" /></Ic></BigIcon>
        <BigLabel>稿纸设置</BigLabel>
      </Big>
      <RibbonSep $ml={18} />
      <Big $w={112} $ml={24} $dim>
        <BigIcon><Ic w={46} h={46} c="#bcbcbc"><path d="M0 4h46M0 14h12M34 14h12M0 24h12M34 24h12M0 34h12M34 34h12M0 44h46" /><path d="M23 34l-9-13c2-7 8-5 9-1 1-4 7-6 9 1z" /></Ic></BigIcon>
        <BigLabel>文字环绕<Caret $c="#aaa" /></BigLabel>
      </Big>
      <Big $w={67} $ml={23}>
        <BigIcon><Ic w={46} h={48} c="#333"><path d="M3 0v48" /><rect x="8" y="4" width="22" height="14" /><rect x="8" y="26" width="36" height="18" fill="#dcdfe2" /></Ic></BigIcon>
        <BigLabel>对齐<Caret /></BigLabel>
      </Big>
      <Stack $w={112} $ml={21}>
        <StackRow $dim>
          <Ic w={30} h={36} c="#c2c2c2"><path d="M2 3v30M28 3v30M8 8h10v10H8zM14 18h10v10H14z" /></Ic>
          组合<Caret $c="#aaa" $ml={2} />
        </StackRow>
        <StackRow $dim>
          <Ic w={30} h={36} c="#c2c2c2"><path d="M2 34V14h8M14 34V4h10v30zM2 34h26" /></Ic>
          旋转<Caret $c="#aaa" $ml={2} />
        </StackRow>
      </Stack>
      <Big $w={95} $ml={15}>
        <BigIcon><Ic w={46} h={50} c="#333"><path d="M2 2h36v34H2z" strokeDasharray="5 3" /><path d="M24 18l20 18-10 2-6 12z" fill="#ccc" /></Ic></BigIcon>
        <BigLabel>选择窗格</BigLabel>
      </Big>
      <Stack $w={160} $ml={20}>
        <StackRow $dim>
          <Ic w={32} h={40} c="#c2c2c2"><path d="M14 6l12 12-12 12L2 18zM14 18l12 12-12 10L2 30zM26 12V2M23 5l3-4 3 4" /></Ic>
          上移一层<Caret $c="#aaa" $ml={2} />
        </StackRow>
        <StackRow $dim>
          <Ic w={32} h={40} c="#c2c2c2"><path d="M14 2l12 10-12 12L2 12zM14 12l12 12-12 12L2 24zM26 28v10M23 35l3 4 3-4" /></Ic>
          下移一层<Caret $c="#aaa" $ml={2} />
        </StackRow>
      </Stack>
    </Ribbon>

    <Main>
      <LeftRail>
        <RailBtn $on><Ic w={27} h={33} c="#555"><rect x="1" y="1" width="25" height="31" /><path d="M7 10h13M7 16h13M7 22h13" strokeDasharray="3 2" /></Ic></RailBtn>
        <RailBtn><Ic w={31} h={31} c="#555"><path d="M2 2h10l-5 7zM17 6h12M2 14v15h27V13H14" /></Ic></RailBtn>
        <RailBtn><Ic w={23} h={33} c="#555"><path d="M2 2h19v29l-9.500-10L2 31z" /></Ic></RailBtn>
        <RailBtn><Ic w={34} h={34} c="#555"><circle cx="14" cy="14" r="12" /><path d="M22 23l10 10" /></Ic></RailBtn>
      </LeftRail>
      <NavPanel>
        <NavHead>
          <NavTitle>目录</NavTitle>
          <Ic w={20} h={20} c="#777" sw={1.8}><path d="M1 1l18 18M19 1L1 19" /></Ic>
        </NavHead>
        <NavTools>
          <Ic w={26} h={24} c="#777" sw={2}><rect x="1" y="1" width="24" height="22" rx="2" /><path d="M8 9l5 6 5-6" /></Ic>
          <Ic w={26} h={24} c="#777" sw={2}><rect x="1" y="1" width="24" height="22" rx="2" /><path d="M8 15l5-6 5 6" /></Ic>
          <Ic w={26} h={24} c="#ccc" sw={2}><rect x="1" y="1" width="24" height="22" rx="2" /><path d="M8 12h10M13 7v10" /></Ic>
          <Ic w={26} h={24} c="#ccc" sw={2}><rect x="1" y="1" width="24" height="22" rx="2" /><path d="M8 12h10" /></Ic>
          <Smart>
            <Ic w={30} h={28} c="#fff" fill="#4a90e2" sw={2}><circle cx="15" cy="14" r="14" stroke="none" /><path d="M6 14l3-3 3 3M18 14l3-3 3 3" fill="none" /></Ic>
            智能识别目录
          </Smart>
        </NavTools>
        <NavBox />
      </NavPanel>
      <DocArea>
        <Page><CropMark /><CropLeft /></Page>
      </DocArea>
      <Scroll>
        <ScrollGlyph $mt={0}><Down $c="#aaa" /><Down $c="#aaa" /></ScrollGlyph>
        <ScrollGlyph $mt={18}><Up $c="#999" /></ScrollGlyph>
        <Thumb />
        <ScrollGlyph $mt={395}><Down $c="#888" /></ScrollGlyph>
        <ScrollGlyph $mt={22}><Up $c="#999" /><Up $c="#999" /></ScrollGlyph>
        <ScrollDot $mt={18} />
        <ScrollGlyph $mt={18}><Down $c="#888" /><Down $c="#888" /></ScrollGlyph>
      </Scroll>
      <StylePanel>
        <StyleHead>
          样式和格式<Caret $ml={8} />
          <HeadTools>
            <Ic w={26} h={30} c="#555" sw={2}><path d="M8 2h10v8l6 8H2l6-8zM13 18v11" /></Ic>
            <Ic w={22} h={22} c="#555" sw={2.2}><path d="M1 1l20 20M21 1L1 21" /></Ic>
          </HeadTools>
        </StyleHead>
        <Combo>正文<Caret $c="#777" $s={7} /></Combo>
        <BtnRow><PanelBtn>新样式...</PanelBtn><PanelBtn>清除格式</PanelBtn></BtnRow>
        <HintLabel>请选择要应用的格式</HintLabel>
        <StyleList>
          <StyleItem><HeadingText $fs={40} $gap={12}>标题 1</HeadingText><Enter /></StyleItem>
          <StyleItem><HeadingText $fs={38} $gap={12}>标题 2</HeadingText><Enter /></StyleItem>
          <StyleItem><HeadingText $fs={38} $gap={12}>标题 3</HeadingText><Enter /></StyleItem>
          <StyleItem><HeadingText $fs={36} $gap={12}>标题 4</HeadingText><Enter /></StyleItem>
          <StyleItem><DefaultText>默认段落字体</DefaultText><Under>a</Under></StyleItem>
          <StyleItem $sel><BodyText>正文</BodyText><Enter /></StyleItem>
        </StyleList>
        <ShowRow>显示:<ShowSelect>有效样式<Caret $c="#777" $s={5} /></ShowSelect></ShowRow>
      </StylePanel>
      <RightRail>
        <Handle />
        <RightBtn $on $mt={22}><Ic w={34} h={34} c="#555"><path d="M2 32h30M10 26l18-22 5 4-18 20H5c0-3 2-6 5-6z" /></Ic></RightBtn>
        <RightBtn $mt={9}><Ic w={30} h={32} c="#555"><path d="M2 2l26 14-11 3-6 11z" /></Ic></RightBtn>
        <RightBtn $mt={7}><Ic w={34} h={28} c="#555" sw={2}><circle cx="6" cy="6" r="4" /><path d="M10 6h24M0 22h22" /><circle cx="26" cy="22" r="4" /></Ic></RightBtn>
        <RightBtn $mt={9}><Ic w={32} h={32} c="#666" sw={2.2}><circle cx="16" cy="16" r="14" /><path d="M11 12c0-6 10-6 10 0 0 4-5 4-5 8M16 24v2" /></Ic></RightBtn>
        <RightBtn $mt={9}><Ic w={34} h={34} c="#555" sw={2}><path d="M2 10c0-6 4-8 8-8h14c4 0 8 2 8 8M4 14v18h14M10 14v8" /><circle cx="24" cy="26" r="7" fill="#666" /></Ic></RightBtn>
        <RailFoot><FootLine /><Dots>○○○</Dots></RailFoot>
      </RightRail>
    </Main>

    <StatusBar>
      <StatusItem $w={105}>页码: 1</StatusItem>
      <StatusItem $w={132}>页面: 1/1</StatusItem>
      <StatusItem $w={103}>节: 1/1</StatusItem>
      <StatusItem $w={200}>设置值: 2.5厘米</StatusItem>
      <StatusItem $w={75}>行: 1</StatusItem>
      <StatusItem $w={93}>列: 1</StatusItem>
      <StatusItem $w={107}>字数: 0</StatusItem>
      <StatusItem $w={175}>
        <Ic w={28} h={30} c="#555" sw={2}><path d="M1 1h26v24H17l-3 4-3-4H1z" /><path d="M10 8l8 9M18 8l-8 9" /></Ic>拼写检查
      </StatusItem>
      <StatusItem $w={170}>
        <Ic w={28} h={30} c="#555" sw={2}><path d="M1 1h26v24H17l-3 4-3-4H1z" /><path d="M10 8l8 9M18 8l-8 9" /></Ic>文档校对
      </StatusItem>
      <StatusRight>
        <Ic w={38} h={34} c="#555" sw={2.5}><path d="M3 22l9-10h14l9 10-9 10H12z" /><circle cx="19" cy="22" r="5" /><path d="M19 1v6M6 4l3 5M32 4l-3 5" /></Ic>
        <ViewActive><Ic w={28} h={34} c="#555"><path d="M1 1h18l8 8v24H1zM7 14h14M7 22h14" /></Ic></ViewActive>
        <Gap $w={17} />
        <Ic w={30} h={34} c="#555"><path d="M8 3h22M8 12h22M8 21h22M8 31h22M0 3h4M0 12h4M0 21h4M0 31h4" /></Ic>
        <Gap $w={20} />
        <Ic w={31} h={36} c="#555"><path d="M1 1h29v29H19l-3 4-3-4H1zM16 1v29" /></Ic>
        <Gap $w={22} />
        <Ic w={30} h={32} c="#555" sw={2}><circle cx="15" cy="16" r="14" /><ellipse cx="15" cy="16" rx="7" ry="14" /><path d="M1 16h28M3 9h24M3 23h24" /></Ic>
        <Gap $w={21} />
        <Ic w={34} h={36} c="#555" sw={2}><path d="M2 34h30M6 28L26 2l6 4-18 22H6z" /></Ic>
        <Gap $w={57} />
        <Ic w={30} h={36} c="#555" sw={2.2}><path d="M7 2H1v8M23 2h6v8M7 34H1v-8M23 34h6v-8" /><rect x="8" y="10" width="14" height="16" /></Ic>
        <Percent>100%</Percent>
        <Caret $c="#999" $ml={12} />
        <Gap $w={26} />
        <Ic w={20} h={6} c="none" fill="#444"><rect width="20" height="5" /></Ic>
        <Slider><Knob /></Slider>
        <Gap $w={23} />
        <Ic w={22} h={24} c="#444" sw={4}><path d="M11 1v22M0 12h22" /></Ic>
        <Gap $w={25} />
        <Ic w={30} h={30} c="#555" sw={2.2}><path d="M10 10L2 2M2 8V2h6M20 10l8-8M28 8V2h-6M10 20l-8 8M2 22v6h6M20 20l8 8M28 22v6h-6" /></Ic>
      </StatusRight>
    </StatusBar>

    <Taskbar>
      <Slot $w={96}><Ic w={32} h={32} c="none" fill="#fff"><path d="M0 5l14-2v13H0zM16 2.500L32 0v16H16zM0 18h14v11L0 27zM16 18h16v14l-16-2.500z" /></Ic></Slot>
      <Slot $w={96}><Ic w={32} h={34} c="#ddd" sw={2.5}><circle cx="20" cy="12" r="10" /><path d="M13 20L2 33" /></Ic></Slot>
      <Slot $w={108}><Ic w={44} h={46} c="none" fill="#f3c814"><path d="M0 0h44v46H0z" /><path d="M44 20v26H26z" fill="#5a4a14" /></Ic></Slot>
      <Slot $w={80} $ml={4} $run><Ic w={42} h={44} c="none" fill="#f5cf60"><path d="M0 4h16l4 5h22v33H0z" /><path d="M0 4h18v6H0z" fill="#c9962a" /><path d="M12 24h18v18H12z" fill="#4f9bd6" /></Ic></Slot>
      <Slot $w={80} $ml={18} $run><Ic w={34} h={44} c="#d9f2e6" sw={2}><ellipse cx="17" cy="22" rx="16" ry="20" fill="#1c6c55" /><ellipse cx="17" cy="22" rx="11" ry="15" fill="#20b98a" /></Ic></Slot>
      <Slot $w={96} $ml={10} $run $act><Ic w={40} h={40} c="none" fill="#e02c2c"><path d="M0 2h12l8 20 8-20h12L30 38H10z" /><path d="M16 38L30 4h4L22 38z" fill="#f0641e" /></Ic></Slot>
      <Tray>
        <TrayItem $ml={0}><Ic w={26} h={16} c="#ddd" sw={2.5}><path d="M1 15L13 2l12 13" /></Ic></TrayItem>
        <TrayItem $ml={22}><Ic w={26} h={38} c="none" fill="#3a8fd8"><path d="M3 14h20v24H3z" /><path d="M6 0h14v14H6z" fill="#ddd" /></Ic></TrayItem>
        <TrayItem $ml={22}><Ic w={24} h={42} c="#ddd" sw={2}><rect x="6" y="1" width="12" height="26" rx="6" fill="#eee" /><path d="M2 20c0 14 20 14 20 0M12 31v9M6 40h12" /></Ic></TrayItem>
        <TrayItem $ml={26}><Ic w={26} h={42} c="none" fill="#111"><ellipse cx="13" cy="12" rx="9" ry="11" fill="#222" stroke="#555" /><ellipse cx="13" cy="26" rx="11" ry="12" fill="#eee" /><path d="M3 22h20l-4 8H7z" fill="#d9272e" /><path d="M5 38h7v3H5zM15 38h7v3h-7z" fill="#e8a51c" /></Ic></TrayItem>
        <TrayItem $ml={18}><Ic w={34} h={38} c="#ddd" sw={2}><path d="M1 2h10v20H1zM11 6h22v22H11M22 28v8M14 36h16" /></Ic></TrayItem>
        <TrayItem $ml={14}><Ic w={34} h={34} c="#ddd" sw={2}><path d="M2 12h5l8-8v26l-8-8H2zM20 12c2 3 2 7 0 10M25 8c3 5 3 13 0 18M30 3c5 8 5 20 0 28" /></Ic></TrayItem>
        <TrayItem $ml={13}><Ic w={32} h={46} c="#fff" fill="#3d8fe0" sw={2}><ellipse cx="16" cy="23" rx="16" ry="22" stroke="none" /><path d="M8 12l16 12-8 0 3 8z" fill="#eaf4ff" stroke="none" /></Ic></TrayItem>
        <TrayItem $ml={17}><Ic w={34} h={36} c="none" fill="#2fb84a"><ellipse cx="13" cy="14" rx="13" ry="13" /><ellipse cx="24" cy="24" rx="10" ry="11" fill="#ddd" /></Ic></TrayItem>
        <TrayItem $ml={17}>中</TrayItem>
        <TrayItem $ml={29}><Ic w={31} h={46} c="none" fill="#e8601c"><path d="M3 4l25-4 3 40-26 6z" /><path d="M22 13H11v9h9v10H9" stroke="#fff" strokeWidth="4" fill="none" /></Ic></TrayItem>
        <Clock>11:35<br />2021/9/17 星期五</Clock>
        <TrayItem $ml={27}><Ic w={48} h={50} c="#444" sw={2}><path d="M2 2h34v30H20l-8 8v-8H2z" fill="#f3f3f3" /><path d="M9 10h20M9 17h20M9 24h12" stroke="#333" /><circle cx="33" cy="34" r="14" fill="#222" stroke="#888" /></Ic></TrayItem>
        <Gap $w={35} />
      </Tray>
    </Taskbar>

    <Dialog>
      <DlgTitle>
        <Ic w={32} h={32} c="none" fill="#4e93e4"><rect width="32" height="32" rx="2" /><path d="M7 9l4 14 5-11 5 11 4-14" stroke="#fff" strokeWidth="2" fill="none" /></Ic>
        <DlgTitleText>页面设置</DlgTitleText>
        <DlgClose><Ic w={22} h={22} c="#333" sw={2.4}><path d="M1 1l20 20M21 1L1 21" /></Ic></DlgClose>
      </DlgTitle>
      <DlgTabs>
        <DlgTab $w={119} $on>页边距</DlgTab>
        <DlgTab $w={96}>纸张</DlgTab>
        <DlgTab $w={95}>版式</DlgTab>
        <DlgTab $w={145}>文档网格</DlgTab>
        <DlgTab $w={93}>分栏</DlgTab>
      </DlgTabs>
      <Pane>
        <Section>页边距</Section>
        <Form>
          <Lb>上(T):</Lb>
          <Spin $active>1.5<SpinUD /></Spin>
          <DocUnit />
          <Lb>下(B):</Lb>
          <Spin $active><Sel>2.54</Sel><SpinUD /></Spin>
          <DocUnit />
          <Lb>左(L):</Lb>
          <Spin>3.18<SpinUD /></Spin>
          <DocUnit />
          <Lb>右(R):</Lb>
          <Spin>3.18<SpinUD /></Spin>
          <DocUnit />
          <Lb>装订线位置(U):</Lb>
          <Combo2>左<Caret $c="#111" $s={7} /></Combo2>
          <span />
          <Lb>装订线宽(G):</Lb>
          <Spin>0<SpinUD /></Spin>
          <DocUnit />
        </Form>
        <Section $mt={22}>方向</Section>
        <Orients>
          <OrientCol>
            <Orient $on><PageGlyph>A</PageGlyph></Orient>
            <OrientLabel>纵向(P)</OrientLabel>
          </OrientCol>
          <OrientCol>
            <Orient><PageGlyph $land>A</PageGlyph></Orient>
            <OrientLabel>横向(S)</OrientLabel>
          </OrientCol>
        </Orients>
        <Section $mt={23}>页码范围</Section>
        <Indented $mt={19}>多页(M):</Indented>
        <SelectWrap><Combo2 $w={290}>普通<Caret $c="#111" $s={7} /></Combo2></SelectWrap>
        <Section $mt={138}>预览</Section>
        <ApplyRow>
          <div>
            <Indented $mt={17}>应用于(Y):</Indented>
            <SelectWrap><Combo2 $w={290}>整篇文档<Caret $c="#111" $s={7} /></Combo2></SelectWrap>
          </div>
          <Preview><PrevLine /><PrevLine /><PrevLine /></Preview>
        </ApplyRow>
      </Pane>
      <Cursor>
        <Ic w={28} h={40} c="#777" sw={2} fill="#fff"><path d="M2 2v30l7-6 5 12 6-3-5-11h10z" /></Ic>
      </Cursor>
    </Dialog>

    <Banner>
      <BannerLine>自定义纸张大小</BannerLine>
      <BannerLine>宽度<Colon>：</Colon><Sp $w={30} /><Latin $em={1.112}>10</Latin>厘米<Sp $w={90} />高度<Latin $em={0.556}>6</Latin>厘米</BannerLine>
      <BannerLine>页边距<Colon>：</Colon><Sp $w={15} />上<Sp $w={25} /><Latin $em={2.945}>1.5CM</Latin><Sp $w={45} />下<Sp $w={25} /><Latin $em={2.111}>1CM</Latin><Sp $w={45} />左右各<Sp $w={15} /><Latin $em={2.945}>0.5CM</Latin></BannerLine>
    </Banner>

    <TopBlack />
    <Mark>
      <MarkRing />
      <MarkBadge>1</MarkBadge>
      <MarkText>轻映录屏</MarkText>
      <Meter><MeterBar /></Meter>
    </Mark>
  </Screen>
);

export default App;
